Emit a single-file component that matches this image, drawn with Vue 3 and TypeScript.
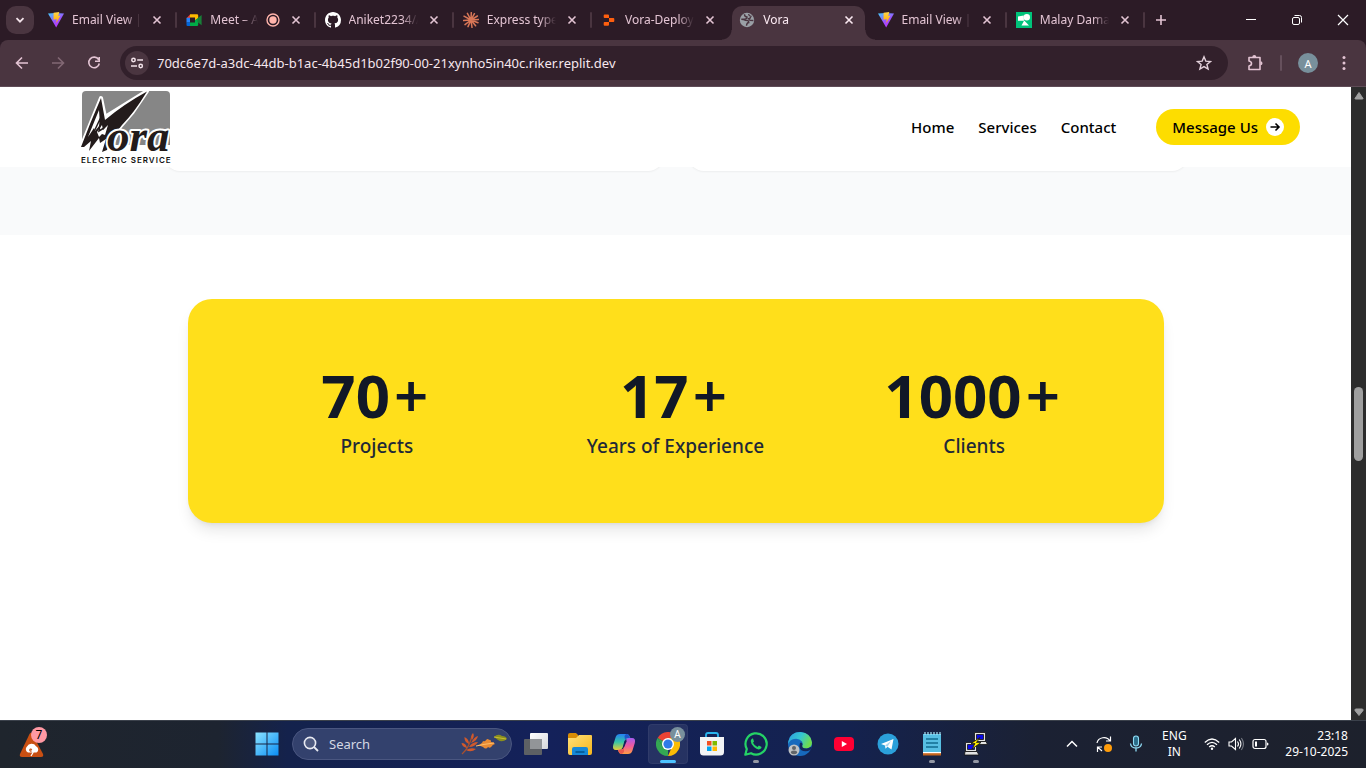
<script setup lang="ts">
interface Tab {
  title: string
  icon: 'vite' | 'meet' | 'github' | 'claude' | 'replit' | 'globe' | 'malay'
  active?: boolean
  recording?: boolean
  divider?: boolean
}

interface Stat {
  value: string
  label: string
}

const tabs: Tab[] = [
  { title: 'Email View |', icon: 'vite', divider: true },
  { title: 'Meet – A', icon: 'meet', recording: true, divider: true },
  { title: 'Aniket2234/A', icon: 'github', divider: true },
  { title: 'Express types', icon: 'claude', divider: true },
  { title: 'Vora-Deploy', icon: 'replit' },
  { title: 'Vora', icon: 'globe', active: true },
  { title: 'Email View |', icon: 'vite', divider: true },
  { title: 'Malay Dama', icon: 'malay', divider: true },
]

const url = '70dc6e7d-a3dc-44db-b1ac-4b45d1b02f90-00-21xynho5in40c.riker.replit.dev'

const links: string[] = ['Home', 'Services', 'Contact']

const stats: Stat[] = [
  { value: '70', label: 'Projects' },
  { value: '17', label: 'Years of Experience' },
  { value: '1000', label: 'Clients' },
]
</script>

<template>
  <div class="screen">
    <div class="tabstrip">
      <button class="tab-search" aria-label="Search tabs">
        <svg width="12" height="12" viewBox="0 0 12 12"><path d="M2.5 4.2 6 7.7l3.5-3.5" fill="none" stroke="#f3e3ea" stroke-width="1.8" /></svg>
      </button>
      <div class="tabs">
        <div v-for="(tab, i) in tabs" :key="i" class="tab" :class="{ active: tab.active, divider: tab.divider }">
          <button class="tab-main">
            <svg v-if="tab.icon === 'vite'" class="fav" viewBox="0 0 16 16">
              <defs>
                <linearGradient :id="'v' + i" x1="0" y1="0" x2="0.6" y2="1"><stop offset="0" stop-color="#41d1ff" /><stop offset="0.6" stop-color="#9a52fe" /><stop offset="1" stop-color="#bd34fe" /></linearGradient>
                <linearGradient :id="'b' + i" x1="0" y1="0" x2="0" y2="1"><stop offset="0" stop-color="#ffd64a" /><stop offset="1" stop-color="#ffa800" /></linearGradient>
              </defs>
              <path d="M0 1.6 8 .9 16 1.6 8.2 15.6Z" :fill="`url(#v${i})`" />
              <path d="M5.6.8 11.3 0l-1 3.9 2.2-.3-4.2 7.6.4-4.2-3.2.7Z" :fill="`url(#b${i})`" />
            </svg>
            <svg v-else-if="tab.icon === 'meet'" class="fav" viewBox="0 0 16 16">
              <path d="M.5 6.2 4 2.5V6.2Z" fill="#ea4335" />
              <path d="M.5 5.8H4V10.6H.5Z" fill="#2684fc" />
              <path d="M.5 10.4H4V14H1.6Q.5 14 .5 12.9Z" fill="#0066da" />
              <path d="M4 2.2H11Q12.2 2.2 12.2 3.4V6.6L9 8.2V5.6H4Z" fill="#ffba00" />
              <path d="M4 10.5H9V8.2L12.2 6V12.8Q12.2 14 11 14H4Z" fill="#00ac47" />
              <path d="M11.5 6.2 15.6 3V13.2L11.5 10Z" fill="#188038" />
            </svg>
            <svg v-else-if="tab.icon === 'github'" class="fav" viewBox="0 0 16 16">
              <path fill="#fff" d="M8 0C3.58 0 0 3.58 0 8c0 3.54 2.29 6.53 5.47 7.59.4.07.55-.17.55-.38 0-.19-.01-.82-.01-1.49-2.01.37-2.53-.49-2.69-.94-.09-.23-.48-.94-.82-1.13-.28-.15-.68-.52-.01-.53.63-.01 1.08.58 1.23.82.72 1.21 1.87.87 2.33.66.07-.52.28-.87.51-1.07-1.78-.2-3.64-.89-3.64-3.95 0-.87.31-1.59.82-2.15-.08-.2-.36-1.02.08-2.12 0 0 .67-.21 2.2.82.64-.18 1.32-.27 2-.27s1.36.09 2 .27c1.53-1.04 2.2-.82 2.2-.82.44 1.1.16 1.92.08 2.12.51.56.82 1.27.82 2.15 0 3.07-1.87 3.75-3.65 3.95.29.25.54.73.54 1.48 0 1.07-.01 1.93-.01 2.2 0 .21.15.46.55.38A8.01 8.01 0 0 0 16 8c0-4.42-3.58-8-8-8Z" />
            </svg>
            <svg v-else-if="tab.icon === 'claude'" class="fav" viewBox="0 0 16 16">
              <path d="M8 8 8.3.6M8 8l3.4-6.3M8 8l6.4-4M8 8l7.6-.6M8 8l7 2.8M8 8l4.6 5.8M8 8l1 7.5M8 8l-3 6.6M8 8l-6 4.6M8 8 .5 8.6M8 8 1 4.2M8 8 4.4 1.4" stroke="#d97757" stroke-width="1.5" stroke-linecap="round" fill="none" />
            </svg>
            <svg v-else-if="tab.icon === 'replit'" class="fav" viewBox="0 0 16 16">
              <path d="M3.6 2.4H7Q8 2.4 8 3.4V6H3.6Q2.7 6 2.7 5V3.4Q2.7 2.4 3.6 2.4ZM8 6H12.4Q13.3 6 13.3 7V9Q13.3 10 12.4 10H8ZM3.6 10H8V12.8Q8 13.7 7 13.7H3.6Q2.7 13.7 2.7 12.8V11Q2.7 10 3.6 10Z" fill="#ff5f0f" />
            </svg>
            <svg v-else-if="tab.icon === 'globe'" class="fav" viewBox="0 0 16 16">
              <circle cx="8" cy="8" r="7.2" fill="#9aa0a6" />
              <path d="M5.5 2.3Q5.5 5 8 5 8.200 7 5.500 7.200H2.300Q5 7.300 6.200 8.200 9.800 8 9.800 10.500 7.800 10.500 7.500 13.800" fill="none" stroke="#4a3540" stroke-width="1.400" />
              <path d="M9.600 2Q9.800 4 12 4.300 11.500 6.500 9.600 6.700L11 8.300 14.400 8.500" fill="none" stroke="#4a3540" stroke-width="1.300" />
            </svg>
            <svg v-else class="fav" viewBox="0 0 16 16">
              <path d="M0 0H16V16H0Z" fill="#00c27a" />
              <path d="M2 4.5 7.7 3.6 8 8.8H2Z" fill="#fff" />
              <circle cx="10.800" cy="5.200" r="3.200" fill="#fff" />
              <path d="M8.200 8.600 13 13.500H5.500Z" fill="#fff" />
            </svg>
            <span class="tab-title">{{ tab.title }}</span>
            <svg v-if="tab.recording" class="rec" viewBox="0 0 14 14"><circle cx="7" cy="7" r="6" fill="none" stroke="#ffb4ab" stroke-width="1.4" /><circle cx="7" cy="7" r="3.7" fill="#ffb4ab" /></svg>
          </button>
          <button class="tab-close" aria-label="Close tab">
            <svg width="16" height="16" viewBox="0 0 16 16"><path d="m4.5 4.5 7 7m0-7-7 7" stroke="currentColor" stroke-width="1.6" /></svg>
          </button>
        </div>
      </div>
      <button class="new-tab" aria-label="New tab">
        <svg width="12" height="12" viewBox="0 0 12 12"><path d="M6 1V11M1 6H11" stroke="#e3c4d3" stroke-width="1.6" /></svg>
      </button>
      <div class="win-controls">
        <button aria-label="Minimize"><svg width="12" height="12" viewBox="0 0 12 12"><path d="M1 5.5H11" stroke="#fff" /></svg></button>
        <button aria-label="Restore"><svg width="12" height="12" viewBox="0 0 12 12" fill="none" stroke="#fff"><rect x="1.5" y="3.5" width="7" height="7" rx="1.5" /><path d="M3.5 1.5H8.5Q10.5 1.5 10.5 3.5V8.5" /></svg></button>
        <button aria-label="Close"><svg width="12" height="12" viewBox="0 0 12 12"><path d="m1 1 10 10M11 1 1 11" stroke="#fff" stroke-width="1.2" /></svg></button>
      </div>
    </div>

    <div class="toolbar">
      <div class="nav-buttons">
        <button aria-label="Back"><svg width="16" height="16" viewBox="0 0 16 16"><path d="M14 8H3M8 2.5 2.5 8 8 13.5" fill="none" stroke="#e3c4d3" stroke-width="1.6" /></svg></button>
        <button aria-label="Forward"><svg width="16" height="16" viewBox="0 0 16 16"><path d="M2 8H13M8 2.5 13.5 8 8 13.5" fill="none" stroke="#826874" stroke-width="1.6" /></svg></button>
        <button aria-label="Reload"><svg width="16" height="16" viewBox="0 0 16 16"><path d="M12.6 4.6A5.3 5.3 0 1 0 13.3 8.5M13.2 2V6.2H9" fill="none" stroke="#e3c4d3" stroke-width="1.6" /></svg></button>
      </div>
      <div class="omnibox">
        <button class="site-info" aria-label="View site information">
          <svg width="14" height="14" viewBox="0 0 14 14" fill="none" stroke="#f3e3ea" stroke-width="1.5"><circle cx="3.500" cy="4" r="1.700" /><path d="M7.2 4H13" /><circle cx="10.700" cy="10" r="1.700" /><path d="M1 10H7" /></svg>
        </button>
        <input class="url" type="text" :value="url" aria-label="Address bar" />
        <button class="star" aria-label="Bookmark this tab">
          <svg width="16" height="16" viewBox="0 0 16 16"><path d="M8 1.8 9.8 6.1 14.5 6.5 10.9 9.5 12.1 14.1 8 11.6 3.9 14.1 5.1 9.5 1.5 6.5 6.2 6.1Z" fill="none" stroke="#e3d0da" stroke-width="1.4" /></svg>
        </button>
      </div>
      <button class="ext" aria-label="Extensions">
        <svg width="18" height="18" viewBox="0 0 18 18"><path d="M3 3.500H14V15.500H3V12Q5.500 11.500 5.500 9.500T3 7Z" fill="none" stroke="#e3c4d3" stroke-width="1.6" stroke-linejoin="round" /><path d="M6.300 3A2 2 0 0 1 10.300 3ZM14.500 7.300A2 2 0 0 1 14.500 11.300Z" fill="#e3c4d3" /></svg>
      </button>
      <span class="tb-divider"></span>
      <button class="avatar" aria-label="Profile">A</button>
      <button class="menu" aria-label="Menu">
        <svg width="4" height="16" viewBox="0 0 4 16" fill="#e3c4d3"><circle cx="2" cy="2.5" r="1.5" /><circle cx="2" cy="8" r="1.5" /><circle cx="2" cy="13.5" r="1.5" /></svg>
      </button>
    </div>

    <div class="viewport">
      <div class="page">
        <header class="site-header">
          <a class="logo" href="#" aria-label="Vora Electric Service">
            <svg width="96" height="76" viewBox="0 0 96 76">
              <path d="M6 2H86Q90 2 90 6V56H2V6Q2 2 6 2Z" fill="#868686" />
              <path d="M1 58 21 9 25 28 67 2 52 24 40 38 30 60 8 62Z" fill="#fff" stroke="#fff" stroke-width="4" stroke-linejoin="round" />
              <path d="M1 58Q10 34 21 9L25 31Q44 15 67 2.500 54 24 42 36 32 48 27 61L22 63 26 50 20 54 19 49 9 62 11 52 4 58Z" fill="#231b1b" />
              <path d="M8 48 19 21 20 36 15 42 14 39ZM17 43 22 36 23 41 28 36 25 46 22 45 19 48Z" fill="#fff" />
              <path d="M12 47 21 28 19 42 24 39" fill="none" stroke="#231b1b" stroke-width="1.5" />
              <text x="27" y="62" class="script">ora</text>
              <text x="1" y="74" class="tagline">ELECTRIC SERVICE</text>
            </svg>
          </a>
          <nav class="site-nav">
            <a v-for="link in links" :key="link" href="#">{{ link }}</a>
          </nav>
          <button class="cta">
            Message Us
            <span class="cta-arrow"><svg width="12" height="12" viewBox="0 0 12 12"><path d="M1.5 6H10M6.5 2.5 10 6 6.5 9.5" fill="none" stroke="#000" stroke-width="1.6" /></svg></span>
          </button>
        </header>
        <section class="cards">
          <div class="card"></div>
          <div class="card"></div>
        </section>
        <section class="stats-section">
          <div class="stats">
            <div v-for="stat in stats" :key="stat.label" class="stat">
              <div class="value">{{ stat.value }}<span class="plus">+</span></div>
              <div class="label">{{ stat.label }}</div>
            </div>
          </div>
        </section>
      </div>
      <div class="scrollbar">
        <svg width="10" height="17" viewBox="0 0 10 17"><path d="M5 5.5 9 11.5Q9 12 8.5 12H1.5Q1 12 1 11.5Z" fill="#a0a0a0" stroke="#a0a0a0" stroke-linejoin="round" /></svg>
        <div class="track"><div class="before"></div><div class="thumb"></div><div class="after"></div></div>
        <svg width="10" height="17" viewBox="0 0 10 17"><path d="M5 12.5 9 7.5Q9 6 8.5 6H1.5Q1 6 1 7.5Z" fill="#a0a0a0" stroke="#a0a0a0" stroke-linejoin="round" /></svg>
      </div>
    </div>

    <footer class="taskbar">
      <button class="widget" aria-label="Widgets">
        <svg width="28" height="30" viewBox="0 0 28 30">
          <path d="M10.5 5Q12 2.5 13.5 5L24 25Q25 28 22 28H3Q0 28 1 25Z" fill="#c94f12" />
          <path d="M9 23.5A3.6 3.6 0 0 1 8 17.5 5 4.6 0 0 1 17 17.2 3.500 3.500 0 0 1 17.500 23.500Z" fill="#fff" />
          <path d="M13 20.500Q10.800 19.500 10.800 21T13 22" stroke="#c94f12" stroke-width="1.200" fill="none" />
          <path d="M12.600 22.500Q15 22 13.500 24.500L12 27" stroke="#fff" stroke-width="1.300" fill="none" />
        </svg>
        <span class="badge">7</span>
      </button>

      <div class="apps">
        <button class="app" aria-label="Start">
          <svg width="24" height="24" viewBox="0 0 24 24">
            <defs><linearGradient id="win" x1="0" y1="0" x2="1" y2="1"><stop offset="0" stop-color="#8be3ff" /><stop offset="1" stop-color="#0a8df5" /></linearGradient></defs>
            <path d="M.5.5H11.5V11.5H.5ZM12.5.5H23.5V11.5H12.5ZM.5 12.5H11.5V23.5H.5ZM12.5 12.5H23.5V23.5H12.5Z" fill="url(#win)" />
          </svg>
        </button>
        <label class="search">
          <svg width="16" height="16" viewBox="0 0 16 16"><circle cx="7" cy="7" r="5.6" fill="#ffffff22" stroke="#e8eaf2" stroke-width="1.6" /><path d="m11 11 4 4" stroke="#e8eaf2" stroke-width="1.8" /></svg>
          <input type="text" placeholder="Search" aria-label="Search" />
          <svg class="leaves" width="46" height="24" viewBox="0 0 46 24">
            <path d="M1 22Q8 16 11 4" stroke="#a9502f" stroke-width="1.2" fill="none" />
            <path d="M11 8Q9 4 12 1 14 4 11 8ZM10 11Q13 5 17 4 16 9 10 11ZM8 15Q11 10 17 10 14 15 8 15ZM5 18Q10 15 15 17 10 21 5 18ZM8 12Q3 10 3.500 5 8 7 8 12ZM6 16Q1 15 .500 11 5 11 6 16Z" fill="#d0592c" />
            <path d="M17 13Q21 12 22 9 24 10 25 8 27 6 28 8 30 7 30 10 33 10 34 12 31 13 31 14 29 17 27 15 25 18 22 15Z" fill="#e98b34" />
            <path d="M15 14Q24 12 33 11" stroke="#ffbd69" stroke-width="1" fill="none" />
            <path d="M33 5Q37 1 41 4 45 4 46 7 41 11 37 8Z" fill="#8b8f1d" />
            <path d="M33 5 45 7" stroke="#c9bd32" fill="none" />
          </svg>
        </label>
        <button class="app" aria-label="Task view">
          <svg width="24" height="24" viewBox="0 0 24 24"><defs><linearGradient id="tv" x2="1" y2="1"><stop stop-color="#fff" /><stop offset="1" stop-color="#d5d7da" /></linearGradient></defs><rect x="6" y="1" width="18" height="16" rx="1" fill="url(#tv)" /><rect x="0" y="7" width="18" height="16" rx="1" fill="#5d6064" /><path d="M6 7H18V17H6Z" fill="#929598" /></svg>
        </button>
        <button class="app" aria-label="File Explorer">
          <svg width="24" height="24" viewBox="0 0 24 24"><defs><linearGradient id="fe" x2="1" y2="1"><stop stop-color="#ffe17a" /><stop offset="1" stop-color="#f7b51b" /></linearGradient></defs><path d="M0 3Q0 1 2 1H8L10 3V8H0Z" fill="#d88c05" /><path d="M0 6H8L11 3H23Q24 3 24 4V21Q24 23 22 23H2Q0 23 0 21Z" fill="url(#fe)" /><path d="M4 23V17Q4 15 6 15H18Q20 15 20 17V23Z" fill="#1688d8" /><path d="M7.5 19H16.5V21H7.5Z" fill="#075f9d" /></svg>
        </button>
        <button class="app" aria-label="Copilot">
          <svg width="24" height="24" viewBox="0 0 24 24">
            <defs>
              <linearGradient id="cp1" x2="0" y2="1"><stop stop-color="#2480f2" /><stop offset="0.5" stop-color="#35c5a7" /><stop offset="1" stop-color="#e9cf36" /></linearGradient>
              <linearGradient id="cp2" x2="0" y2="1"><stop stop-color="#a45cf0" /><stop offset="0.5" stop-color="#f05a9c" /><stop offset="1" stop-color="#ff9d42" /></linearGradient>
            </defs>
            <path d="M8 2H15Q17 2 18 5L18.5 7H15Q13 7 12.3 9.5L10.5 16Q9.8 18 7 18H4Q0 18 1.2 13L3.7 5Q4.7 2 8 2Z" fill="url(#cp1)" />
            <path d="M16 22H9Q7 22 6.3 19L5.8 17.5H9Q11.2 17.5 12 15L14 8Q14.7 6 17 6H20Q24 6 22.8 11L20.3 19Q19.3 22 16 22Z" fill="url(#cp2)" />
            <path d="M14 2Q17 2 18 6H15.5Q13.7 6 13 8L12.5 4Z" fill="#1d54c8" />
            <path d="M13 8.500 15 8.500 11.500 16.500 9.500 17Q11 16.500 11.500 14Z" fill="#14215a" />
            <path d="M10 22Q7 22 6.2 18H9Q11 18 11.8 15L12 20Z" fill="#e9584c" />
          </svg>
        </button>
        <button class="app current" aria-label="Google Chrome">
          <svg width="24" height="24" viewBox="0 0 24 24">
            <path d="M12 12 1.6 6A12 12 0 0 1 22.4 6H12Z" fill="#ea4335" />
            <path d="M12 12V24A12 12 0 0 1 1.6 6L6.8 15Z" fill="#34a853" />
            <path d="M12 12H17.2L12 24A12 12 0 0 0 22.4 6H12Z" fill="#fbbc04" />
            <path d="M6.8 15 1.6 6 12 12Z" fill="#34a853" />
            <circle cx="12" cy="12" r="6" fill="#fff" /><circle cx="12" cy="12" r="4.6" fill="#2f7be8" />
          </svg>
          <span class="profile-badge">A</span>
        </button>
        <button class="app" aria-label="Microsoft Store">
          <svg width="24" height="24" viewBox="0 0 24 24"><path d="M6 6V3Q6 1 8 1H16Q18 1 18 3V6" fill="none" stroke="#29b4ee" stroke-width="1.8" /><path d="M0 5H24V20Q24 23.5 20.5 23.5H3.5Q0 23.5 0 20Z" fill="#f2f3f5" /><path d="M7 9H11.5V13.5H7Z" fill="#f25022" /><path d="M12.5 9H17V13.5H12.5Z" fill="#7fba00" /><path d="M7 14.5H11.5V19H7Z" fill="#00a4ef" /><path d="M12.5 14.5H17V19H12.5Z" fill="#ffb900" /></svg>
        </button>
        <button class="app running" aria-label="WhatsApp">
          <svg width="24" height="24" viewBox="0 0 24 24"><path d="M1.3 22.7 2.8 17A10.6 10.6 0 1 1 7 21.2Z" fill="none" stroke="#25d366" stroke-width="2.2" stroke-linejoin="round" /><path d="M8.3 6.5Q7 7 6.7 9 6.8 12 10 15T15.5 17.3Q17.5 17 17.6 15L14.9 13.6 13.5 15Q10.5 13.8 9 10.7L10 9.4 9 6.6Z" fill="#25d366" /></svg>
        </button>
        <button class="app" aria-label="Microsoft Edge">
          <svg width="24" height="24" viewBox="0 0 24 24">
            <defs><linearGradient id="ed" x2="1" y2="0.4"><stop stop-color="#2d9be0" /><stop offset="0.55" stop-color="#35c7d0" /><stop offset="1" stop-color="#6edc4f" /></linearGradient></defs>
            <circle cx="12" cy="12" r="12" fill="#1769bd" />
            <path d="M.3 9.5Q2 0 12.5 0 23 1 24 10.5 24 16 18 16.5 13 16.5 14 14 15.5 12 14 9.5 11 6 6 7 2 7.5.3 12Z" fill="url(#ed)" />
            <path d="M14.5 12Q13 16.8 19 16.5L24 14.5 22.500 18Q17 20.500 13 18 10.500 15 12 11 13.500 9.500 14.500 12Z" fill="#14285b" />
            <circle cx="6" cy="18" r="5.5" fill="#bfc2c5" /><circle cx="6" cy="16" r="2" fill="#606469" /><path d="M2.8 21Q3 18.6 6 18.6T9.2 21Q6 23.5 2.8 21Z" fill="#606469" />
          </svg>
        </button>
        <button class="app" aria-label="YouTube">
          <svg width="24" height="24" viewBox="0 0 24 24"><rect x="2" y="5" width="20" height="14" rx="4" fill="#ff0033" /><path d="M9.8 9 15 12 9.8 15Z" fill="#fff" /></svg>
        </button>
        <button class="app" aria-label="Telegram">
          <svg width="24" height="24" viewBox="0 0 24 24"><circle cx="12" cy="12" r="10.5" fill="#2ba0da" /><path d="M5 12 17.5 7 15.5 17.5 11.5 14.7 9.5 16.7 9 13.4Z" fill="#fff" /><path d="M9 13.4 15 9 11.5 14.7Z" fill="#a9d6ef" /></svg>
        </button>
        <button class="app running" aria-label="Notepad">
          <svg width="24" height="24" viewBox="0 0 24 24"><path d="M3 2H21V21H3Z" fill="#57bfe3" /><path d="M3 21H21V23.5H3Z" fill="#c7651d" /><path d="M3 20H21V21.2H3Z" fill="#fff" /><path d="M5 0V3M8 0V3M11 0V3M14 0V3M17 0V3M20 0V3" stroke="#a8e5f7" stroke-width="1.2" /><path d="M6 7H18M6 11H18M6 15H18" stroke="#126d91" stroke-width="1.6" /></svg>
        </button>
        <button class="app running" aria-label="PuTTY">
          <svg width="24" height="24" viewBox="0 0 24 24" stroke="#111" stroke-width="0.8"><path d="M10.500 .500H21.500V9.500H10.500Z" fill="#e2e2e2" /><path d="M12.500 2.500H19.500V7.500H12.500Z" fill="#0808e8" /><path d="M11 9.500H22L23.500 12.500H13Z" fill="#e2e2e2" /><path d="M1.500 10.500H12.500V19.500H1.500Z" fill="#e2e2e2" /><path d="M3.500 12.500H10.500V17.500H3.500Z" fill="#0808e8" /><path d="M1 19.500H13L15 23H.500Z" fill="#e2e2e2" /><path d="M16 5.500 7 11.500 11 11.500 8 17 17 10.500H12.500Z" fill="#ffed00" /></svg>
        </button>
      </div>

      <div class="tray">
        <button class="chev" aria-label="Show hidden icons"><svg width="12" height="12" viewBox="0 0 12 12"><path d="M1 8.5 6 3.5 11 8.5" fill="none" stroke="#fff" stroke-width="1.5" /></svg></button>
        <button class="sync" aria-label="Update available"><svg width="18" height="18" viewBox="0 0 18 18"><path d="M2 8A7 6.5 0 0 1 15 6M15.5 1.5V6H11M2.5 17V12H7M2.5 12 7 16" fill="none" stroke="#fff" stroke-width="1.2" /><circle cx="13" cy="13" r="4" fill="#ff9c0a" /></svg></button>
        <button class="mic" aria-label="Microphone in use"><svg width="14" height="18" viewBox="0 0 14 18"><rect x="4.5" y="1" width="5" height="10" rx="2.5" fill="#2a6c88" stroke="#8fdcf5" stroke-width="1.1" /><path d="M1.5 8.5Q2 13 7 13T12.5 8.5M7 13V16.5" fill="none" stroke="#8fdcf5" stroke-width="1.3" /></svg></button>
        <button class="lang">ENG<br />IN</button>
        <button class="status" aria-label="Network, volume and battery">
          <svg width="16" height="16" viewBox="0 0 16 16" fill="none" stroke="#fff" stroke-width="1.3"><path d="M.8 6.5Q8-.5 15.2 6.5M3 8.8Q8 4 13 8.8M5.2 11Q8 8.5 10.8 11" /><circle cx="8" cy="12.8" r="1.2" fill="#fff" stroke="none" /></svg>
          <svg width="16" height="16" viewBox="0 0 16 16" fill="none" stroke="#fff" stroke-width="1.1"><path d="M1 6H3.5L7.5 2.5V13.5L3.5 10H1ZM9.5 5.5Q11.5 8 9.5 10.5M11.3 3.5Q14.5 8 11.3 12.5" /><path d="M13.4 2Q17.5 8 13.4 14" stroke="#777b84" /></svg>
          <svg width="17" height="12" viewBox="0 0 17 12"><rect x="1" y="1.5" width="13" height="9" rx="2" fill="none" stroke="#fff" stroke-width="1.2" /><path d="M3 3.5H5V8.5H3Z" fill="#fff" /><path d="M15 4.5Q16.5 4.5 16.5 6T15 7.5Z" fill="#fff" /></svg>
        </button>
        <button class="clock">23:18<br />29-10-2025</button>
      </div>
    </footer>
  </div>
</template>

<style>
html,
body {
  background: #ffffff;
}
</style>

<style scoped>
* {
  box-sizing: border-box;
}

button {
  display: flex;
  align-items: center;
  justify-content: center;
  padding: 0;
  border: 0;
  background: none;
  color: inherit;
  font: inherit;
}

input {
  min-width: 0;
  padding: 0;
  border: 0;
  outline: 0;
  background: none;
  color: inherit;
  font: inherit;
}

svg {
  display: block;
  flex: none;
}

.screen {
  display: flex;
  flex-direction: column;
  height: 100vh;
  background: #2c1b26;
  font-family: "Noto Sans", "Open Sans", sans-serif;
}

/* Browser chrome */
.tabstrip {
  display: flex;
  flex: none;
  align-items: center;
  height: 40px;
  color: #e3c4d3;
}

.tab-search {
  flex: none;
  width: 28px;
  height: 28px;
  margin: 0 4px 0 6px;
  border-radius: 10px;
  background: #4a3540;
}

.tabs {
  display: flex;
  flex: 0 1 1106px;
  min-width: 0;
  height: 40px;
}

.tab {
  position: relative;
  display: flex;
  flex: 1 1 0;
  align-items: center;
  min-width: 0;
  height: 34px;
  margin: 6px 3px 0;
  padding: 0 8px 6px 7px;
}

.tab.divider::after {
  content: "";
  position: absolute;
  top: 6px;
  right: -4px;
  width: 2px;
  height: 16px;
  border-radius: 1px;
  background: #4a3540;
}

.tab.active {
  border-radius: 10px 10px 0 0;
  background: #4a3540;
  color: #fbeaf2;
}

.tab.active::before,
.tab.active::after {
  content: "";
  position: absolute;
  bottom: 0;
  width: 10px;
  height: 10px;
}

.tab.active::before {
  left: -10px;
  background: radial-gradient(circle at 0 0, transparent 9px, #4a3540 10px);
}

.tab.active::after {
  right: -10px;
  background: radial-gradient(circle at 100% 0, transparent 9px, #4a3540 10px);
}

.tab-main {
  flex: 1;
  justify-content: flex-start;
  min-width: 0;
  gap: 8px;
}

.fav {
  width: 16px;
  height: 16px;
}

.rec {
  width: 14px;
  height: 14px;
}

.tab-title {
  flex: 1;
  overflow: hidden;
  font-size: 12px;
  line-height: 18px;
  text-align: left;
  white-space: nowrap;
  mask-image: linear-gradient(to left, transparent 0, #000 16px);
}

.tab-close {
  flex: none;
  width: 16px;
  height: 16px;
  margin-left: 8px;
}

.new-tab {
  flex: none;
  width: 28px;
  height: 28px;
  margin-left: 3px;
}

.win-controls {
  display: flex;
  margin-left: auto;
}

.win-controls button {
  width: 46px;
  height: 40px;
}

.toolbar {
  display: flex;
  flex: none;
  align-items: center;
  height: 47px;
  padding: 0 14px 0 4px;
  border-bottom: 1px solid #5f4c57;
  border-radius: 8px 8px 0 0;
  background: #4a3540;
}

.nav-buttons {
  display: flex;
}

.nav-buttons button {
  width: 36px;
  height: 34px;
}

.omnibox {
  display: flex;
  flex: 1;
  align-items: center;
  height: 34px;
  margin-left: 8px;
  padding: 0 16px 0 5px;
  border-radius: 17px;
  background: #32202b;
}

.site-info {
  flex: none;
  width: 24px;
  height: 24px;
  border-radius: 12px;
  background: #4a3540;
}

.url {
  flex: 1;
  height: 24px;
  margin-left: 8px;
  color: #f6e7ee;
  font-size: 13px;
}

.ext {
  width: 18px;
  height: 28px;
  margin-left: 18px;
}

.tb-divider {
  width: 2px;
  height: 16px;
  margin: 0 16px;
  border-radius: 1px;
  background: #66505c;
}

.avatar {
  width: 20px;
  height: 20px;
  border-radius: 10px;
  background: #78909c;
  color: #ffffff;
  font-size: 11px;
}

.menu {
  width: 16px;
  height: 28px;
  margin-left: 18px;
}

/* Web page */
.viewport {
  display: flex;
  flex: 1;
  min-height: 0;
}

.page {
  flex: 1;
  min-width: 0;
  overflow: hidden;
  background: #ffffff;
}

.site-header {
  position: relative;
  z-index: 1;
  display: flex;
  align-items: center;
  height: 80px;
  padding: 0 51px 0 80px;
  background: #ffffff;
}

.logo {
  margin-right: auto;
}

.script {
  fill: #231b1b;
  stroke: #ffffff;
  stroke-width: 4px;
  stroke-linejoin: round;
  paint-order: stroke;
  font-family: "Liberation Serif", serif;
  font-size: 45px;
  font-style: italic;
  font-weight: 700;
}

.tagline {
  fill: #111111;
  font-family: Inter, sans-serif;
  font-size: 8px;
  font-weight: 600;
  letter-spacing: 1px;
}

.site-nav {
  display: flex;
  gap: 24px;
  margin-right: 40px;
}

.site-nav a {
  color: #000000;
  font-size: 15px;
  font-weight: 500;
  line-height: 24px;
  text-decoration: none;
}

.cta {
  gap: 8px;
  height: 36px;
  padding: 0 16px;
  border-radius: 18px;
  background: #fddd00;
  color: #000000;
  font-size: 15px;
  font-weight: 500;
}

.cta-arrow {
  display: flex;
  align-items: center;
  justify-content: center;
  width: 18px;
  height: 18px;
  border-radius: 9px;
  background: #ffffff;
}

.cards {
  display: grid;
  grid-template-columns: 1fr 1fr;
  gap: 24px;
  height: 108px;
  margin-top: -40px;
  padding: 0 calc((100% - 1024px) / 2) 64px;
  background: #f9fafb;
}

.card {
  border-radius: 16px;
  background: #ffffff;
  box-shadow: 0 1px 2px rgba(0, 0, 0, 0.05);
}

.stats-section {
  padding: 64px 24px;
}

.stats {
  display: grid;
  grid-template-columns: repeat(3, 1fr);
  gap: 48px;
  max-width: 976px;
  margin: 0 auto;
  padding: 64px;
  border-radius: 24px;
  background: #ffdf1b;
  box-shadow: 0 10px 15px -3px rgba(0, 0, 0, 0.1), 0 4px 6px -4px rgba(0, 0, 0, 0.1);
  text-align: center;
}

.value {
  margin-bottom: 6px;
  color: #111827;
  font-size: 60px;
  font-weight: 700;
  line-height: 64px;
}

.plus {
  padding: 0 4px;
  font-weight: 600;
}

.label {
  color: #1f2937;
  font-size: 19px;
  font-weight: 500;
  line-height: 26px;
  white-space: nowrap;
}

.scrollbar {
  display: flex;
  flex: none;
  flex-direction: column;
  align-items: center;
  width: 15px;
  background: #2c2c2c;
}

.track {
  display: flex;
  flex: 1;
  flex-direction: column;
}

.before {
  flex: 283;
}

.thumb {
  flex: 74;
  width: 9px;
  border-radius: 5px;
  background: #9f9f9f;
}

.after {
  flex: 242;
}

/* Taskbar */
.taskbar {
  display: flex;
  flex: none;
  align-items: center;
  height: 48px;
  background: linear-gradient(90deg, #1f252d 0, #1d2430 16%, #14224c 21%, #14215a 40%, #14224f 62%, #1b2133 76%, #1d212c 100%);
  box-shadow: inset 0 1px 0 #3b414b;
  color: #ffffff;
  font-size: 12px;
  line-height: 16px;
}

.widget {
  position: relative;
  width: 28px;
  height: 40px;
  margin-left: 19px;
}

.badge {
  position: absolute;
  top: 3px;
  right: 0;
  width: 16px;
  height: 16px;
  border-radius: 8px;
  background: #ff99a4;
  color: #000000;
}

.apps {
  display: flex;
  align-items: center;
  margin-left: 198px;
}

.app {
  position: relative;
  flex: none;
  width: 40px;
  height: 40px;
  margin: 0 2px;
  border-radius: 4px;
}

.app.current {
  background: #ffffff14;
  box-shadow: inset 0 0 0 1px #ffffff0c;
}

.app.running::after,
.app.current::after {
  content: "";
  position: absolute;
  bottom: 1px;
  left: 17px;
  width: 6px;
  height: 3px;
  border-radius: 2px;
  background: #9498a4;
}

.app.current::after {
  left: 12px;
  width: 16px;
  background: #4cc2ff;
}

.profile-badge {
  position: absolute;
  top: 3px;
  right: 3px;
  width: 15px;
  height: 15px;
  border-radius: 8px;
  background: #78909c;
  font-size: 10px;
  line-height: 15px;
}

.search {
  display: flex;
  align-items: center;
  width: 220px;
  height: 32px;
  margin: 0 2px 0 3px;
  padding: 0 4px 0 10px;
  border: 1px solid #4a5680;
  border-radius: 16px;
  background: #33416d;
}

.search input {
  flex: 1;
  margin-left: 10px;
  font-size: 13px;
}

.search input::placeholder {
  color: #d5d8e4;
  opacity: 1;
}

.tray {
  display: flex;
  align-items: center;
  margin-left: auto;
  padding-right: 18px;
}

.chev,
.sync,
.mic {
  width: 32px;
  height: 40px;
}

.lang {
  width: 44px;
  height: 40px;
}

.status {
  gap: 8px;
  height: 40px;
  padding: 0 8px;
}

.clock {
  height: 40px;
  margin-left: 8px;
  text-align: right;
}
</style>
